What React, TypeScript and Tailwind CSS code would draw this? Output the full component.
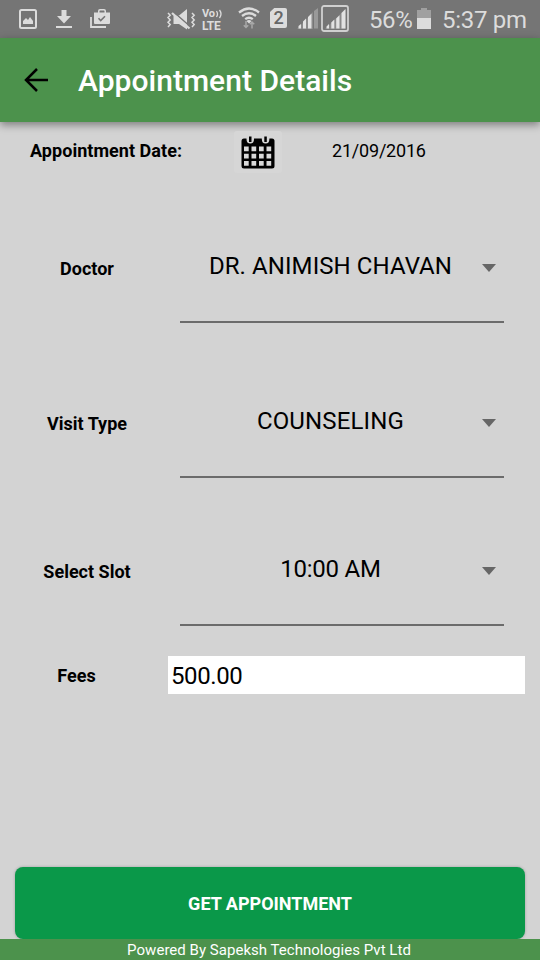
const fields = [
  { label: "Doctor", value: "DR. ANIMISH CHAVAN", spacing: "mt-[31px]", tracking: "tracking-[0.08px]" },
  { label: "Visit Type", value: "COUNSELING", spacing: "mt-[43px]", tracking: "tracking-[0.15px]" },
  { label: "Select Slot", value: "10:00 AM", spacing: "mt-[36px]", tracking: "tracking-[-0.25px]" },
];

function StatusBar() {
  return (
    <div className="flex h-[38px] shrink-0 items-start bg-[#757575] text-[#dcdcdc]">
      {/* Picture */}
      <svg className="mt-[9px] ml-[19px] h-5 w-[18px] shrink-0" viewBox="0 0 18 20" fill="none">
        <rect x="1" y="1" width="16" height="18" rx="1.5" stroke="currentColor" strokeWidth="2" />
        <path d="M4 15v-3l3-3 2 2 2-3 3 4v3z" fill="currentColor" />
      </svg>
      {/* Download */}
      <svg className="mt-[10px] ml-[19px] h-[18px] w-4 shrink-0" viewBox="0 0 16 18" fill="currentColor">
        <path d="M5.5 0h5v6H15l-7 7.5L1 6h4.5zM0 16h16v2H0z" />
      </svg>
      {/* Play store bag */}
      <svg className="mt-[9px] ml-[18px] h-[19px] w-5 shrink-0" viewBox="0 0 20 19" fill="none">
        <path d="M1 8v10h15" stroke="currentColor" strokeWidth="1.8" />
        <path
          d="M4 3.5h4V2q0-2 2-2h4q2 0 2 2v1.5h4V14q0 1-1 1H5q-1 0-1-1zM9.500 3.500h5V2q0-.6-.6-.6h-3.800q-.6 0-.6.6z"
          fill="currentColor"
          fillRule="evenodd"
        />
        <path d="M8.500 9.300l2.200 2.200L15 7.200" stroke="#757575" strokeWidth="1.600" />
      </svg>
      {/* Vibrate / muted */}
      <svg className="mt-[9px] ml-[56px] h-[22px] w-[30px] shrink-0" viewBox="0 0 30 22" fill="none" stroke="currentColor">
        <path d="M2 4l2.200 2.300L2 8.600l2.200 2.300L2 13.200l2.200 2.300L2 18M26 4l2.200 2.300L26 8.600l2.200 2.300-2.200 2.300 2.200 2.300L26 18" strokeWidth="1.500" />
        <path d="M7.500 6.500H13L21 0v20.500l-8-5.500H7.500z" fill="currentColor" stroke="none" />
        <path d="M7 2.500l16 14" stroke="#757575" strokeWidth="1.600" />
        <path d="M6 4l17.500 15.500" strokeWidth="2.200" />
      </svg>
      {/* VoLTE */}
      <div className="mt-[8px] ml-[6px] flex w-[22px] shrink-0 flex-col gap-px font-bold">
        <div className="flex h-[11px] items-center text-[11px] leading-[11px] tracking-[-0.3px]">
          Vo
          <svg className="ml-px h-[10px] w-[7px]" viewBox="0 0 7 10" fill="none" stroke="currentColor" strokeWidth="1.300">
            <path d="M.5 2q2 3 0 6M3.500 1q3 4 0 8" />
          </svg>
        </div>
        <div className="h-[11px] text-[12px] leading-[12px] tracking-[-0.3px]">LTE</div>
      </div>
      {/* Wifi */}
      <svg className="mt-[7px] ml-[14px] h-[22px] w-[22px] shrink-0" viewBox="0 0 22 22" fill="none" stroke="currentColor">
        <path d="M1 5.500Q11-2.500 21 5.500M4 9Q11 3.500 18 9M7.200 12.200q3.800-3 7.600 0" strokeWidth="2.300" />
        <path d="M8.500 14q2.500-1.800 5 0L11 16.500z" fill="currentColor" stroke="none" />
        <path d="M8 14v6.500m-2.200-2.300L8 20.500l2.200-2.300M14 21.500V15m-2.200 2.300L14 15l2.200 2.300" stroke="#a8a8a8" strokeWidth="1.500" />
      </svg>
      {/* SIM 2 */}
      <div className="mt-[8px] ml-[10px] flex h-5 w-[17px] shrink-0 items-center justify-center rounded-[2px] bg-[#dcdcdc] text-[18px] leading-none font-medium text-[#666] [clip-path:polygon(25%_0,100%_0,100%_100%,0_100%,0_20%)]">
        2
      </div>
      {/* Signal, one bar short */}
      <svg className="mt-[8px] ml-[10px] h-[21px] w-[22px] shrink-0" viewBox="0 0 22 21">
        <path d="M0 21L16 4v17z" fill="#8a8a8a" />
        <path d="M1.500 20.500v-2.500L4 16v4.500zM6 20.500v-7L9 10.500v10zM11 20.500V9l3.500-3.500v15z" fill="#e2e2e2" />
        <path d="M17 3l4-3v20.500h-4z" fill="#999" />
      </svg>
      <svg className="mt-[5px] ml-[2px] h-[27px] w-7 shrink-0" viewBox="0 0 28 27">
        <rect x="1" y="1" width="26" height="25" rx="2" fill="none" stroke="#d0d0d0" strokeWidth="1.800" />
        <path d="M4 24L24.500 4v20z" fill="#8a8a8a" />
        <path d="M5.500 23.500V21.500L8 19v4.500zM10.300 23.500v-6l3-3v9zM15.200 23.500v-10l3.300-3.300v13.300zM20.500 23.500V8L24.500 4v19.500z" fill="#e2e2e2" />
      </svg>
      <span className="mt-[7px] ml-[20px] w-[48px] shrink-0 text-[24px] leading-[26px] tracking-[-0.4px] whitespace-nowrap">56%</span>
      <svg className="mt-[8px] h-[21px] w-[14px] shrink-0" viewBox="0 0 14 21">
        <path d="M0 2h4V0h6v2h4v8H0z" fill="#a0a0a0" />
        <path d="M0 10h14v11H0z" fill="#dcdcdc" />
      </svg>
      <span className="mt-[7px] ml-[11px] text-[24px] leading-[26px] tracking-[-0.3px] whitespace-nowrap">5:37 pm</span>
    </div>
  );
}

function CalendarIcon() {
  return (
    <svg className="h-[33px] w-[34px]" viewBox="0 0 34 33">
      <path d="M3 2.500h28q2.500 0 2.500 2.500v25q0 2.500-2.500 2.500H3Q.5 32.500.5 30V5Q.5 2.500 3 2.500z" fill="#000" />
      <path d="M5.500 0v3q0 4.500 3.800 4.500T13 3V0zM20.800 0v3q0 4.500 3.800 4.500t3.800-4.500V0z" fill="#d6d6d6" />
      <path d="M8 .5h2.500V6H8zM23.300.5h2.500V6h-2.500z" fill="#000" />
      <path
        d="M3 10.500h4.700v4.700H3zm7.500 0h4.700v4.700h-4.700zm7.500 0h4.700v4.700H18zm7.500 0h4.700v4.700h-4.700zM3 17.700h4.700v4.700H3zm7.500 0h4.700v4.700h-4.700zm7.500 0h4.700v4.700H18zm7.500 0h4.700v4.700h-4.700zM3 25h4.700v4.700H3zm7.500 0h4.700v4.700h-4.700zm7.500 0h4.700v4.700H18zm7.500 0h4.700v4.700h-4.700z"
        fill="#d9d9d9"
      />
    </svg>
  );
}

type FieldProps = { label: string; value: string; spacing: string; tracking: string };

function Field({ label, value, spacing, tracking }: FieldProps) {
  return (
    <div className={`flex h-28 items-center ${spacing}`}>
      <span className="w-[174px] pt-0.5 text-center text-[18px] font-bold">{label}</span>
      <div className="ml-1.5 flex h-28 w-[324px] items-center border-b-2 border-[#6b6b6b] text-[24px]">
        <span className={`w-[301px] text-center ${tracking}`}>{value}</span>
        <svg className="mt-[3px] ml-px h-2 w-[14px]" viewBox="0 0 14 8">
          <path d="M0 0h14L7 8z" fill="#666" />
        </svg>
      </div>
    </div>
  );
}

export default function App() {
  return (
    <div className="flex h-[960px] w-[540px] flex-col overflow-hidden bg-[#d3d3d3] font-[Roboto,sans-serif] text-black">
      <StatusBar />
      <header className="flex h-[84px] shrink-0 items-center bg-[#4c924c] shadow-[0_3px_8px_rgba(0,0,0,0.4)]">
        <svg className="ml-6 h-6 w-6" viewBox="0 0 24 24" fill="none" stroke="#000" strokeWidth="2.500">
          <path d="M24 12H2M13 1L2 12l11 11" />
        </svg>
        <h1 className="ml-[30px] text-[30px] font-medium tracking-[0.03px] text-white">Appointment Details</h1>
      </header>

      <main className="flex grow flex-col">
        <div className="flex h-[58px] items-center">
          <span className="ml-[30px] w-[204px] pb-0.5 text-[18px] font-bold tracking-[0.04px]">Appointment Date:</span>
          <div className="mt-0.5 flex h-[42px] w-[48px] items-center justify-center rounded-[3px] bg-[#d6d6d6]">
            <CalendarIcon />
          </div>
          <span className="ml-[50px] pb-0.5 text-[18px] tracking-[-0.2px]">21/09/2016</span>
        </div>

        {fields.map((field) => (
          <Field key={field.label} {...field} />
        ))}

        <div className="mt-[30px] flex h-[38px] items-center">
          <span className="w-[153px] text-center text-[18px] font-bold">Fees</span>
          <div className="ml-[15px] flex h-[38px] w-[357px] items-center bg-white pt-0.5 pl-[3px] text-[24px] tracking-[-0.4px]">
            500.00
          </div>
        </div>

        <button className="mx-[15px] mt-auto h-[72px] shrink-0 rounded-lg bg-[#0a9849] text-[18px] font-bold text-white shadow-[0_0_3px_rgba(0,0,0,0.25)]">
          GET APPOINTMENT
        </button>
      </main>

      <footer className="h-[21px] shrink-0 bg-[#4c924c] pr-0.5 text-center text-[15px] leading-[23px] tracking-[0.03px] text-white">
        Powered By Sapeksh Technologies Pvt Ltd
      </footer>
    </div>
  );
}
